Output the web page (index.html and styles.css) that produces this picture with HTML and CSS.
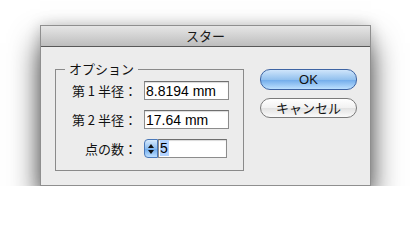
FILE: index.html
```html
<!DOCTYPE html>
<html lang="ja">
<head>
  <meta charset="UTF-8" />
  <title>スター</title>
  <link rel="stylesheet" href="styles.css">
</head>
<body>
  <div class="window">
    <div class="titlebar">スター</div>
    <div class="content">
      <fieldset class="options">
        <legend>オプション</legend>
        <div class="row">
          <label>第 1 半径：</label>
          <input class="field" type="text" value="8.8194 mm" />
        </div>
        <div class="row">
          <label>第 2 半径：</label>
          <input class="field" type="text" value="17.64 mm" />
        </div>
        <div class="row last">
          <label>点の数：</label>
          <span class="stepper">
            <svg width="8" height="12" viewBox="0 0 8 12">
              <path d="M4 1 L7 5 L1 5 Z" fill="#111"/>
              <path d="M4 11 L7 7 L1 7 Z" fill="#111"/>
            </svg>
          </span>
          <span class="field small"><span class="sel">5</span></span>
        </div>
      </fieldset>
      <div class="buttons">
        <button class="btn default">OK</button>
        <button class="btn">キャンセル</button>
      </div>
    </div>
  </div>
</body>
</html>
```

FILE: styles.css
```css
body {
  margin: 0;
  background: #fff;
  font-family: "Liberation Sans", "Noto Sans CJK JP", sans-serif;
  font-size: 13px;
  color: #111;
}
.window {
  margin: 25px 0 0 40px;
  width: 329px;
  height: 159px;
  background: #ececec;
  border: 1px solid #8f8f8f;
  box-shadow: 0 18px 28px rgba(0,0,0,0.7), 0 0 14px rgba(0,0,0,0.18);
}
.titlebar {
  height: 20px;
  line-height: 20px;
  text-align: center;
  font-family: "Noto Sans CJK JP", sans-serif;
  font-size: 13px;
  color: #1a1a1a;
  background: linear-gradient(#e6e6e6, #bdbdbd);
  border-bottom: 1px solid #585858;
}
.content {
  display: flex;
  align-items: flex-start;
  padding: 14px 0 0 14px;
}
.options {
  width: 187px;
  margin: 0;
  padding: 4px 0 2px 0;
  border: 1px solid #8a8a8a;
}
.options legend {
  margin-left: 9px;
  padding: 0 4px;
  line-height: 16px;
  font-family: "Noto Sans CJK JP", sans-serif;
  font-size: 13px;
}
.row {
  display: flex;
  align-items: center;
  height: 19px;
  margin-bottom: 10px;
}
.row.last {
  margin-top: 2px;
}
.row label {
  width: 81px;
  margin-right: 7px;
  text-align: right;
  font-family: "Noto Sans CJK JP", sans-serif;
  font-size: 13px;
  white-space: nowrap;
}
.field {
  width: 81px;
  height: 17px;
  padding: 0 1px;
  border: 1px solid #8c8c8c;
  border-top-color: #6f6f6f;
  background: #fff;
  font-family: "Liberation Sans", sans-serif;
  font-size: 14px;
  color: #000;
  box-shadow: inset 0 1px 1px rgba(0,0,0,0.15);
  outline: none;
}
.field.small {
  box-sizing: border-box;
  width: 69px;
  height: 19px;
  line-height: 17px;
  display: inline-block;
}
.sel {
  background: #b3d3ff;
  padding: 0 1px 0 0;
}
.stepper {
  box-sizing: border-box;
  width: 14px;
  height: 19px;
  display: flex;
  align-items: center;
  justify-content: center;
  border: 1px solid #4a78b8;
  border-radius: 4px 0 0 4px;
  background: linear-gradient(#d8ebfd, #8cbdf0 50%, #6aa8ec 51%, #bfe0ff);
}
.buttons {
  display: flex;
  flex-direction: column;
  gap: 8px;
  margin: 8px 0 0 16px;
}
.btn {
  width: 97px;
  height: 20px;
  padding: 0;
  border: 1px solid #7a7a7a;
  border-radius: 10px;
  background: linear-gradient(#ffffff, #f1f1f1 50%, #e2e2e2 51%, #fafafa);
  font-family: "Noto Sans CJK JP", "Liberation Sans", sans-serif;
  font-size: 13px;
  line-height: 18px;
  color: #111;
}
.btn.default {
  height: 21px;
  border-color: #3e64a3;
  background: linear-gradient(#cfe5fb, #93c1ee 50%, #6faaea 51%, #bde0fe);
  font-family: "Liberation Sans", sans-serif;
}
```
